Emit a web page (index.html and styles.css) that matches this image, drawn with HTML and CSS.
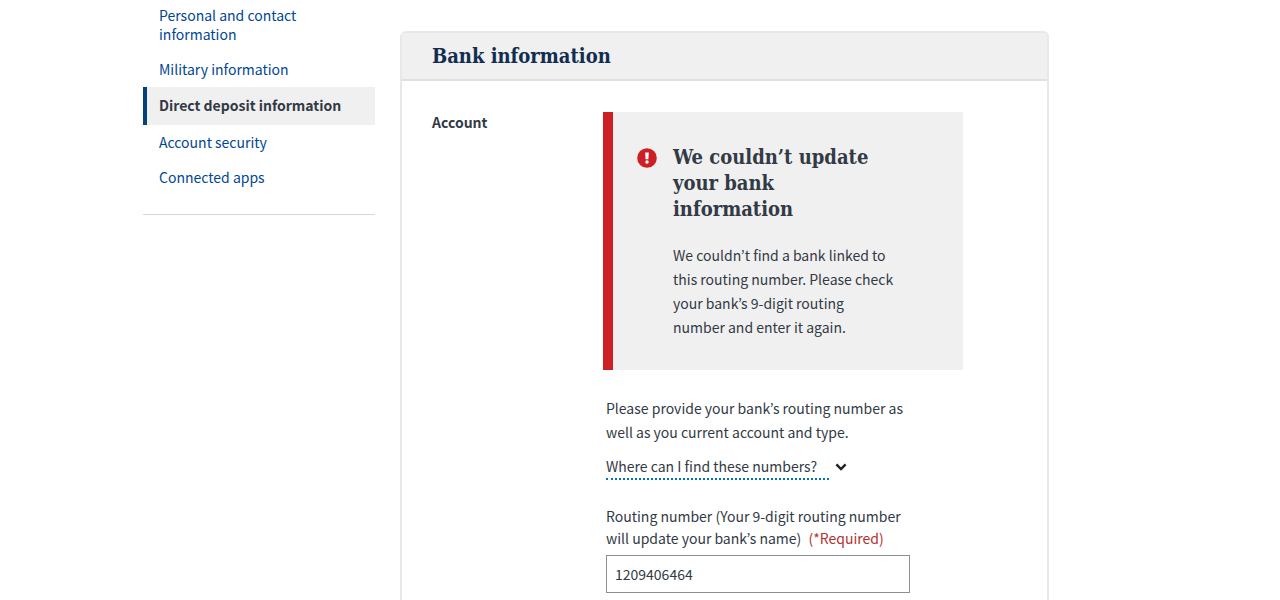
FILE: index.html
```html
<!DOCTYPE html>
<html lang="en">
<head>
<meta charset="utf-8">
<meta name="viewport" content="width=device-width, initial-scale=1">
<title>Direct deposit information</title>
<link rel="stylesheet" href="styles.css">
</head>
<body>
<div class="page">
  <nav class="sidenav" aria-label="Profile">
    <ul class="sidenav-list">
      <li><a class="sidenav-link" href="#personal">Personal and contact information</a></li>
      <li><a class="sidenav-link" href="#military">Military information</a></li>
      <li><a class="sidenav-link is-active" href="#deposit" aria-current="page">Direct deposit information</a></li>
      <li><a class="sidenav-link" href="#security">Account security</a></li>
      <li><a class="sidenav-link" href="#apps">Connected apps</a></li>
    </ul>
  </nav>
  <main class="card">
    <h2 class="card-title">Bank information</h2>
    <div class="card-body">
      <h3 class="row-label">Account</h3>
      <div class="row-content">
        <section class="alert" role="alert">
          <svg class="alert-icon" viewBox="0 0 20 20" aria-hidden="true">
            <circle cx="10" cy="10" r="9.8" fill="#cd2026"/>
            <path d="M8.2 4.6h3.6l-.4 6.6H8.6z" fill="#fff"/>
            <circle cx="10" cy="14" r="1.7" fill="#fff"/>
          </svg>
          <div class="alert-body">
            <h3 class="alert-title">We couldn’t update your bank information</h3>
            <p class="alert-text">We couldn’t find a bank linked to this routing number. Please check your bank’s 9-digit routing number and enter it again.</p>
          </div>
        </section>
        <form class="form">
          <p class="form-intro">Please provide your bank’s routing number as well as you current account and type.</p>
          <button class="help" type="button" aria-expanded="false">
            <span class="help-text">Where can I find these numbers?</span>
            <svg class="help-icon" viewBox="0 0 12 8" aria-hidden="true"><path d="M1.4 1.4 6 6l4.6-4.6" fill="none" stroke="#212121" stroke-width="2.4"/></svg>
          </button>
          <label class="field-label" for="routing">Routing number (Your 9-digit routing number will update your bank’s name) <span class="required">(*Required)</span></label>
          <input class="field" id="routing" type="text" inputmode="numeric" value="1209406464" required>
        </form>
      </div>
    </div>
  </main>
</div>
</body>
</html>
```
FILE: styles.css
```css
* {
  box-sizing: border-box;
}

body {
  margin: 0;
  background: #fff;
  color: #323a45;
  font-family: "Noto Sans CJK KR", "Open Sans", sans-serif;
  font-size: 14px;
  line-height: 24px;
}

h2, h3, p, ul {
  margin: 0;
  padding: 0;
}

.page {
  display: flex;
  gap: 25px;
  align-items: stretch;
  max-width: 994px;
  min-height: 100vh;
  margin: 0 auto;
}

.sidenav {
  flex: 0 0 232px;
}

.sidenav-list {
  list-style: none;
  margin-top: -2px;
  padding-bottom: 19px;
  border-bottom: 1px solid #d6d7d9;
}

.sidenav-link {
  display: block;
  padding: 8px 44px 8px 12px;
  border-left: 4px solid transparent;
  color: #004795;
  line-height: 19px;
  text-decoration: none;
}

.sidenav-link.is-active {
  padding: 9px 12px 10px;
  border-left-color: #00437f;
  background: #f0f0f0;
  color: #323a45;
  font-weight: 700;
}

.card {
  flex: 0 1 649px;
  margin-top: 31px;
  border: 2px solid #e7e8ea;
  border-bottom: 0;
  border-radius: 6px 6px 0 0;
}

.card-title,
.alert-title {
  font-family: "DejaVu Serif Condensed", "DejaVu Serif", serif;
  font-size: 20px;
  font-weight: 700;
  line-height: 26px;
}

.card-title {
  padding: 10px 30px;
  border-bottom: 2px solid #dfe0e2;
  background: #f0f0f0;
  color: #112e51;
}

.card-body {
  display: grid;
  grid-template-columns: 171px minmax(0, 360px);
  padding: 31px 30px 6px;
}

.row-label {
  font-size: 14px;
  line-height: 20px;
}

.alert {
  display: flex;
  gap: 16px;
  padding: 32px 66px 31px 24px;
  border-left: 10px solid #cd2026;
  background: #f0f0f0;
}

.alert-icon {
  flex: none;
  width: 20px;
  height: 20px;
  margin-top: 4px;
}

.alert-text {
  margin-top: 21px;
}

.form {
  width: 307px;
  max-width: 100%;
  padding: 26px 0 0 3px;
}

.help {
  display: flex;
  gap: 6px;
  align-items: center;
  margin-top: 10px;
  padding: 0;
  border: 0;
  background: none;
  color: inherit;
  font: inherit;
}

.help-text {
  padding-right: 12px;
  border-bottom: 2px dotted #0071bb;
}

.help-icon {
  width: 12px;
  height: 8px;
}

.field-label {
  display: block;
  margin-top: 25px;
  line-height: 22px;
}

.required {
  margin-left: 4px;
  color: #b5302f;
}

.field {
  display: block;
  width: 100%;
  height: 38px;
  margin-top: 6px;
  padding: 0 8px;
  border: 1px solid #8c8f94;
  background: #fff;
  color: inherit;
  font: inherit;
}
```
